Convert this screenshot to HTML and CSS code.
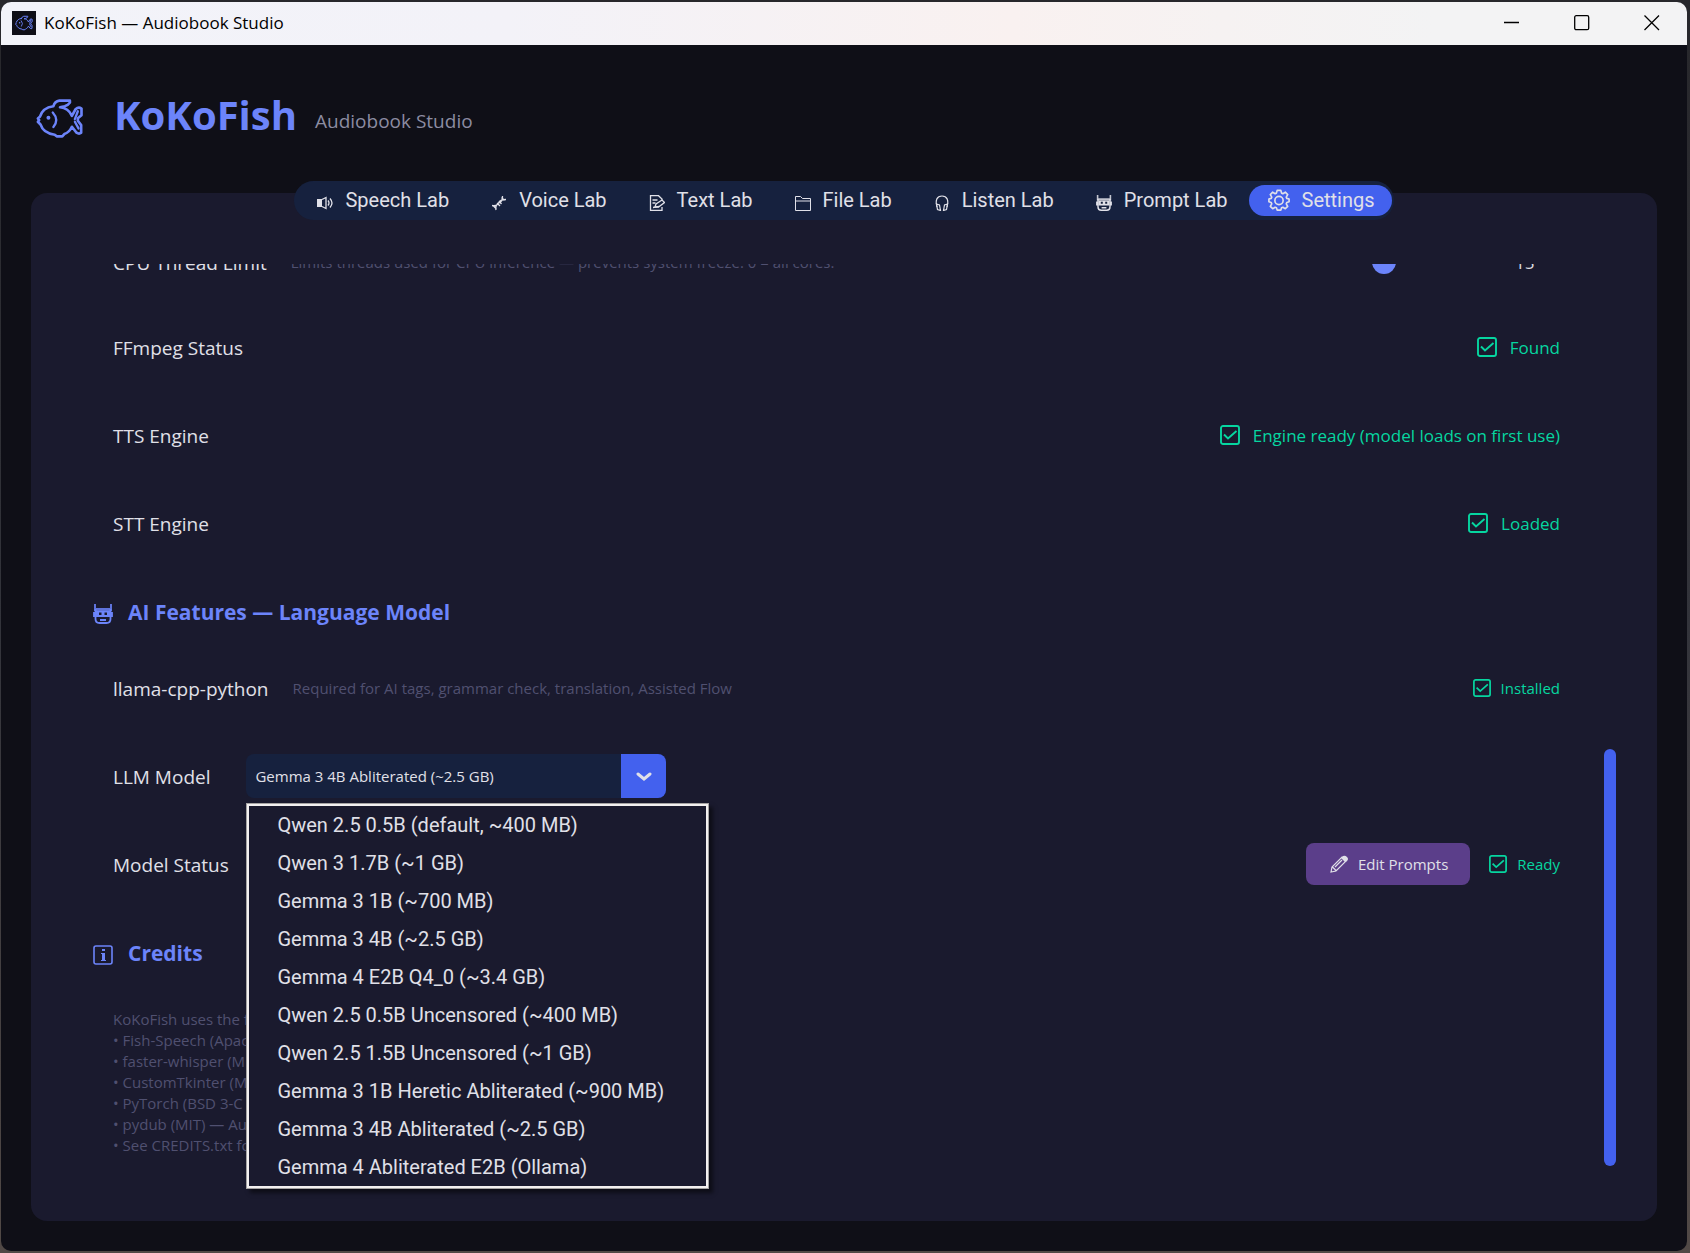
FILE: index.html
```html
<!DOCTYPE html>
<html lang="en">
<head>
    <meta charset="UTF-8">
    <meta name="viewport" content="width=device-width, initial-scale=1.0">
    <title>KoKoFish — Audiobook Studio</title>
    <link rel="stylesheet" href="styles.css">
</head>
<body>
    <!-- Shared icons -->
    <svg class="sprite" aria-hidden="true">
        <symbol id="icon-fish" viewBox="20 22 144 124">
            <g fill="none" stroke="currentColor" stroke-width="8" stroke-linejoin="round" stroke-linecap="round">
                <path d="M72 47C50 50 36 62 31 79L25 84L29 89L25 94L33 102C38 118 52 130 76 133L82 138H99L105 131C115 128 123 120 128 109L142 127Q150 132 156 127V104L146 91V83L157 74V54Q148 48 139 56L128 76C121 60 108 51 92 50L106 47Q117 44 122 36V30H90Q76 32 72 47Z"/>
                <path d="M146 62L137 86M137 94L148 114M70 66Q90 88 72 110" stroke-width="7"/>
            </g>
            <circle cx="57" cy="82" r="6" fill="currentColor"/>
        </symbol>
        <symbol id="icon-speaker" viewBox="0 0 16 16">
            <path d="M0 4h5v8H0z" fill="currentColor"/>
            <path d="M5 4.500l4-2v11l-4-2M11 5.500q2 2.500 0 5M13 3.500q4 4.500 0 9" fill="none" stroke="currentColor" stroke-width="1.300"/>
        </symbol>
        <symbol id="icon-dna" viewBox="0 0 16 16">
            <path d="M1 10.500q5 1 6.500-2.500T15 4.500M5 15q-1-5 3-7t3.500-7M2.500 11l3 3M6 8l3 3M8 6l2.500 3M10.500 2.500l3 3" fill="none" stroke="currentColor" stroke-width="1.300"/>
        </symbol>
        <symbol id="icon-note" viewBox="0 0 16 16">
            <path d="M13 12v3.300H1.500V.7h8L13 4v2M3.500 5h5M3.500 8h3M4 12.500l6-1" fill="none" stroke="currentColor" stroke-width="1.300"/>
            <path d="M6 12l1-3 6-4 2.500 2.500-6 4.500z" fill="none" stroke="currentColor" stroke-width="1.300"/>
        </symbol>
        <symbol id="icon-folder" viewBox="0 0 16 16">
            <path d="M.5 15.500V1.500h5l2 2h8v12zM.5 6h15" fill="none" stroke="currentColor"/>
        </symbol>
        <symbol id="icon-headphones" viewBox="0 0 16 16">
            <path d="M3 12C1 5 3 1 8 1S15 5 13 12" fill="none" stroke="currentColor" stroke-width="1.200"/>
            <path d="M2.500 9l3 1 1 5.500-3-1zM13.500 9l-3 1-1 5.500 3-1z" fill="none" stroke="currentColor" stroke-width="1.200"/>
        </symbol>
        <symbol id="icon-robot" viewBox="0 0 20 20">
            <path d="M1 0h2v4h14V0h2v7H1z" fill="currentColor" fill-opacity=".85"/>
            <path d="M2.500 5v10q0 4 4 4h7q4 0 4-4V5M1 8v5M19 8v5" fill="none" stroke="currentColor" stroke-width="1.800"/>
            <path d="M3 7h14v6H3zM6 8.500v2.500h2.500V8.500zM11.500 8.500v2.500h2.500V8.500z" fill="currentColor" fill-rule="evenodd"/>
            <path d="M7 16h6" stroke="currentColor" stroke-width="2"/>
        </symbol>
        <symbol id="icon-gear" viewBox="0 0 24 24">
            <g fill="none" stroke="currentColor" stroke-width="1.800" stroke-linejoin="round">
                <path d="M10 1.500h4l.8 3 1.400.6 2.700-1.600 2.600 2.600-1.600 2.700.6 1.400 2.500.8v3l-2.500.8-.6 1.400 1.600 2.700-2.600 2.600-2.700-1.600-1.400.6-.8 2.500h-4l-.8-2.500-1.400-.6-2.700 1.600L2.500 18.900l1.600-2.700-.6-1.400L1 14v-3l2.500-.8.6-1.400L2.500 6.100l2.600-2.600 2.700 1.600 1.400-.6z"/>
                <circle cx="12" cy="12.500" r="4.500"/>
            </g>
        </symbol>
        <symbol id="icon-check" viewBox="0 0 20 20">
            <rect x="1" y="1" width="18" height="18" rx="2" fill="none" stroke="currentColor" stroke-width="1.900"/>
            <path d="M4 9.500l4 4 8.500-7.500" fill="none" stroke="currentColor" stroke-width="1.900"/>
        </symbol>
        <symbol id="icon-info" viewBox="0 0 20 20">
            <rect x="1" y="1" width="18" height="18" rx="2" fill="none" stroke="currentColor" stroke-width="1.600"/>
            <path d="M9 4h3v2H9zM8 8h4v7h1v1H8v-1h1V9H8z" fill="currentColor"/>
        </symbol>
        <symbol id="icon-pencil" viewBox="0 0 18 18">
            <path d="M1 17l1-5L12 2l4 4L6 16zM2.500 12l3.500 3.500M5 12l7-7" fill="none" stroke="currentColor" stroke-width="1.200"/>
            <path d="M11 3l2-2q2-1 4 1t0 4l-2 1z" fill="currentColor"/>
        </symbol>
    </svg>

    <div class="window">
        <header class="titlebar">
            <span class="app-icon"><svg><use href="#icon-fish"/></svg></span>
            <span class="window-title">KoKoFish — Audiobook Studio</span>
            <div class="window-controls">
                <button aria-label="Minimize"><svg viewBox="0 0 16 16"><path d="M0 7.500h15"/></svg></button>
                <button aria-label="Maximize"><svg viewBox="0 0 16 16"><rect x=".7" y=".7" width="14" height="14" rx="1.500"/></svg></button>
                <button aria-label="Close"><svg viewBox="0 0 16 16"><path d="M.5.5l14.500 14.500M15 .5L.5 15"/></svg></button>
            </div>
        </header>

        <div class="brand">
            <svg class="logo"><use href="#icon-fish"/></svg>
            <h1>KoKoFish</h1>
            <p>Audiobook Studio</p>
        </div>

        <nav class="tabs">
            <button class="tab"><svg><use href="#icon-speaker"/></svg>Speech Lab</button>
            <button class="tab"><svg><use href="#icon-dna"/></svg>Voice Lab</button>
            <button class="tab"><svg><use href="#icon-note"/></svg>Text Lab</button>
            <button class="tab"><svg><use href="#icon-folder"/></svg>File Lab</button>
            <button class="tab"><svg><use href="#icon-headphones"/></svg>Listen Lab</button>
            <button class="tab"><svg><use href="#icon-robot"/></svg>Prompt Lab</button>
            <button class="tab active"><svg><use href="#icon-gear"/></svg>Settings</button>
        </nav>

        <main class="panel">
            <div class="settings">
                <div class="row threads-row">
                    <label for="threads">CPU Thread Limit</label>
                    <span class="hint">Limits threads used for CPU inference — prevents system freeze. 0 = all cores.</span>
                    <input type="range" id="threads" min="0" max="16" value="15">
                    <output for="threads">15</output>
                </div>
                <div class="row">
                    <span class="label">FFmpeg Status</span>
                    <span class="status"><svg><use href="#icon-check"/></svg>Found</span>
                </div>
                <div class="row">
                    <span class="label">TTS Engine</span>
                    <span class="status"><svg><use href="#icon-check"/></svg>Engine ready (model loads on first use)</span>
                </div>
                <div class="row">
                    <span class="label">STT Engine</span>
                    <span class="status"><svg><use href="#icon-check"/></svg>Loaded</span>
                </div>

                <h2><svg><use href="#icon-robot"/></svg>AI Features — Language Model</h2>
                <div class="row">
                    <span class="label">llama-cpp-python</span>
                    <span class="hint">Required for AI tags, grammar check, translation, Assisted Flow</span>
                    <span class="status small"><svg><use href="#icon-check"/></svg>Installed</span>
                </div>
                <div class="row">
                    <label for="model">LLM Model</label>
                    <div class="combo">
                        <select id="model">
                            <option>Gemma 3 4B Abliterated (~2.5 GB)</option>
                        </select>
                        <span class="combo-arrow"><svg viewBox="0 0 16 12"><path d="M2 3l6 5 6-5"/></svg></span>
                        <ul class="menu" role="listbox" aria-label="LLM Model">
                            <li role="option">Qwen 2.5 0.5B (default, ~400 MB)</li>
                            <li role="option">Qwen 3 1.7B (~1 GB)</li>
                            <li role="option">Gemma 3 1B (~700 MB)</li>
                            <li role="option">Gemma 3 4B (~2.5 GB)</li>
                            <li role="option">Gemma 4 E2B Q4_0 (~3.4 GB)</li>
                            <li role="option">Qwen 2.5 0.5B Uncensored (~400 MB)</li>
                            <li role="option">Qwen 2.5 1.5B Uncensored (~1 GB)</li>
                            <li role="option">Gemma 3 1B Heretic Abliterated (~900 MB)</li>
                            <li role="option" aria-selected="true">Gemma 3 4B Abliterated (~2.5 GB)</li>
                            <li role="option">Gemma 4 Abliterated E2B (Ollama)</li>
                        </ul>
                    </div>
                </div>
                <div class="row">
                    <span class="label">Model Status</span>
                    <button class="edit-button"><svg><use href="#icon-pencil"/></svg>Edit Prompts</button>
                    <span class="status small"><svg><use href="#icon-check"/></svg>Ready</span>
                </div>

                <h2><svg><use href="#icon-info"/></svg>Credits</h2>
                <div class="credits">
                    <p>KoKoFish uses the f</p>
                    <p>• Fish-Speech (Apac</p>
                    <p>• faster-whisper (M</p>
                    <p>• CustomTkinter (M</p>
                    <p>• PyTorch (BSD 3-C</p>
                    <p>• pydub (MIT) — Au</p>
                    <p>• See CREDITS.txt fo</p>
                </div>
            </div>
            <div class="scrollbar"><div class="thumb"></div></div>
        </main>
    </div>
</body>
</html>
```
FILE: styles.css
```css
* {
    box-sizing: border-box;
}
body {
    margin: 0;
    padding: 2px 3px 2px 1px;
    min-height: 100vh;
    display: flex;
    background: linear-gradient(#27272b, #33343b 50%, #514946);
    font-family: 'Open Sans', 'Noto Sans', sans-serif;
    color: #e0e0e8;
}
h1, h2, p, ul {
    margin: 0;
    padding: 0;
}
button {
    border: none;
    background: none;
    color: inherit;
    font-family: inherit;
    cursor: pointer;
}
svg {
    flex: none;
}
.sprite {
    position: absolute;
    width: 0;
    height: 0;
}
.window {
    flex: 1;
    display: flex;
    flex-direction: column;
    background-color: #0f0f17;
    border-radius: 10px;
    overflow: hidden;
}

/* Title bar */
.titlebar {
    display: flex;
    align-items: center;
    height: 43px;
    padding: 0 0 2px 11px;
    background: linear-gradient(90deg, #f2f3f9, #f3f2f8 30%, #f9f1f0 60%, #f3f3f4 85%);
    color: #000;
}
.app-icon {
    display: flex;
    align-items: center;
    justify-content: center;
    width: 24px;
    height: 24px;
    margin-right: 8px;
    background-color: #0f0f17;
    color: #6c84fa;
}
.app-icon svg {
    width: 18px;
    height: 16px;
}
.window-title {
    font-size: 17px;
}
.window-controls {
    display: flex;
    margin-left: auto;
    height: 100%;
}
.window-controls button {
    display: flex;
    align-items: center;
    justify-content: center;
    width: 70px;
    padding: 0;
}
.window-controls svg {
    width: 16px;
    height: 16px;
    fill: none;
    stroke: #000;
    stroke-width: 1.3;
}

/* Brand */
.brand {
    display: flex;
    align-items: center;
    height: 136px;
    padding: 4px 0 0 35px;
}
.logo {
    width: 48px;
    height: 41px;
    margin: 6px 30px 0 0;
    color: #6c84fa;
}
h1 {
    font-size: 40px;
    line-height: 52px;
    color: #6c84fa;
}
.brand p {
    margin: 12px 0 0 18px;
    font-size: 19px;
    color: #8c8ca2;
}

/* Tabs */
.tabs {
    position: relative;
    z-index: 1;
    align-self: center;
    display: flex;
    height: 39px;
    padding: 4px 2px;
    border-radius: 20px;
    background-color: #16213e;
}
.tab {
    display: flex;
    align-items: center;
    gap: 12px;
    padding: 0 21px 2px;
    font-family: Roboto, sans-serif;
    font-size: 20px;
}
.tab svg {
    width: 16px;
    height: 16px;
    margin-top: 6px;
}
.tab.active {
    padding: 0 17px 2px 19px;
    border-radius: 16px;
    background-color: #4361ee;
}
.tab.active svg {
    width: 22px;
    height: 22px;
    margin-top: 0;
}

/* Panel */
.panel {
    flex: 1;
    display: flex;
    min-height: 0;
    margin: -27px 30px 30px;
    padding: 71px 41px 16px 61px;
    border-radius: 16px;
    background-color: #1a1a2e;
}
/* Scrolled to the end */
.settings {
    flex: 1;
    display: flex;
    flex-direction: column;
    justify-content: flex-end;
    height: 941px;
    padding-bottom: 49px;
    overflow: hidden;
}
.row {
    flex: none;
    display: flex;
    align-items: center;
    height: 88px;
    padding: 0 44px 0 21px;
}
.threads-row {
    height: 82px;
}
.row label, .label {
    padding-top: 2px;
    font-size: 19px;
    line-height: 26px;
}
.hint {
    margin-left: 24px;
    font-size: 15px;
    color: #505070;
}
.row input {
    appearance: none;
    width: 240px;
    height: 24px;
    margin: 0 106px 0 auto;
    background: linear-gradient(#16213e, #16213e) center / 100% 4px no-repeat;
}
.row input::-webkit-slider-thumb {
    appearance: none;
    width: 24px;
    height: 24px;
    border-radius: 12px;
    background-color: #6c84fa;
}
.row output {
    width: 45px;
    font-size: 17px;
}
.status {
    display: flex;
    align-items: center;
    gap: 13px;
    margin-left: auto;
    font-size: 17px;
    color: #06d6a0;
}
.status svg {
    width: 20px;
    height: 20px;
}
.status.small {
    gap: 10px;
    font-size: 15px;
}
.status.small svg {
    width: 18px;
    height: 18px;
}
h2 {
    flex: none;
    display: flex;
    align-items: center;
    gap: 15px;
    height: 77px;
    padding: 12px 0 0 1px;
    font-size: 21px;
    line-height: 30px;
    color: #6c84fa;
}
h2 svg {
    width: 20px;
    height: 20px;
    margin-top: 4px;
}

/* Model selector */
.combo {
    position: relative;
    width: 420px;
    margin-left: 36px;
}
.combo select {
    appearance: none;
    display: block;
    width: 100%;
    height: 44px;
    padding: 0 60px 0 9px;
    border: none;
    border-radius: 8px;
    background-color: #16213e;
    font-family: inherit;
    font-size: 15px;
    color: inherit;
}
.combo-arrow {
    position: absolute;
    top: 0;
    right: 0;
    display: flex;
    align-items: center;
    justify-content: center;
    width: 45px;
    height: 44px;
    border-radius: 0 8px 8px 0;
    background-color: #4361ee;
    pointer-events: none;
}
.combo-arrow svg {
    width: 16px;
    height: 12px;
    margin-top: 2px;
    fill: none;
    stroke: currentColor;
    stroke-width: 3;
    stroke-linecap: round;
}
.menu {
    position: absolute;
    z-index: 2;
    top: 49px;
    left: 0;
    width: 463px;
    border: 1px solid #a5a3a3;
    outline: 2px solid #f3f0f0;
    outline-offset: -3px;
    padding: 2px;
    background-color: #1a1a2e;
    box-shadow: 4px 4px 4px rgba(0, 0, 0, 0.5);
    list-style: none;
    font-family: Roboto, sans-serif;
    font-size: 20px;
    line-height: 38px;
}
.menu li {
    padding-left: 28px;
    white-space: nowrap;
}

.edit-button {
    display: flex;
    align-items: center;
    gap: 10px;
    height: 42px;
    margin-left: auto;
    padding: 0 22px 0 24px;
    border-radius: 8px;
    background-color: #5b3e8a;
    font-size: 15px;
}
.edit-button svg {
    width: 18px;
    height: 18px;
}
.edit-button + .status {
    margin-left: 19px;
}

/* Credits */
.credits {
    padding: 24px 0 0 21px;
    font-size: 15px;
    line-height: 21px;
    color: #505070;
}

/* Scrollbar */
.scrollbar {
    display: flex;
    flex-direction: column;
    justify-content: flex-end;
    width: 12px;
    padding-bottom: 39px;
}
.thumb {
    height: 417px;
    border-radius: 6px;
    background-color: #4361ee;
}
```
